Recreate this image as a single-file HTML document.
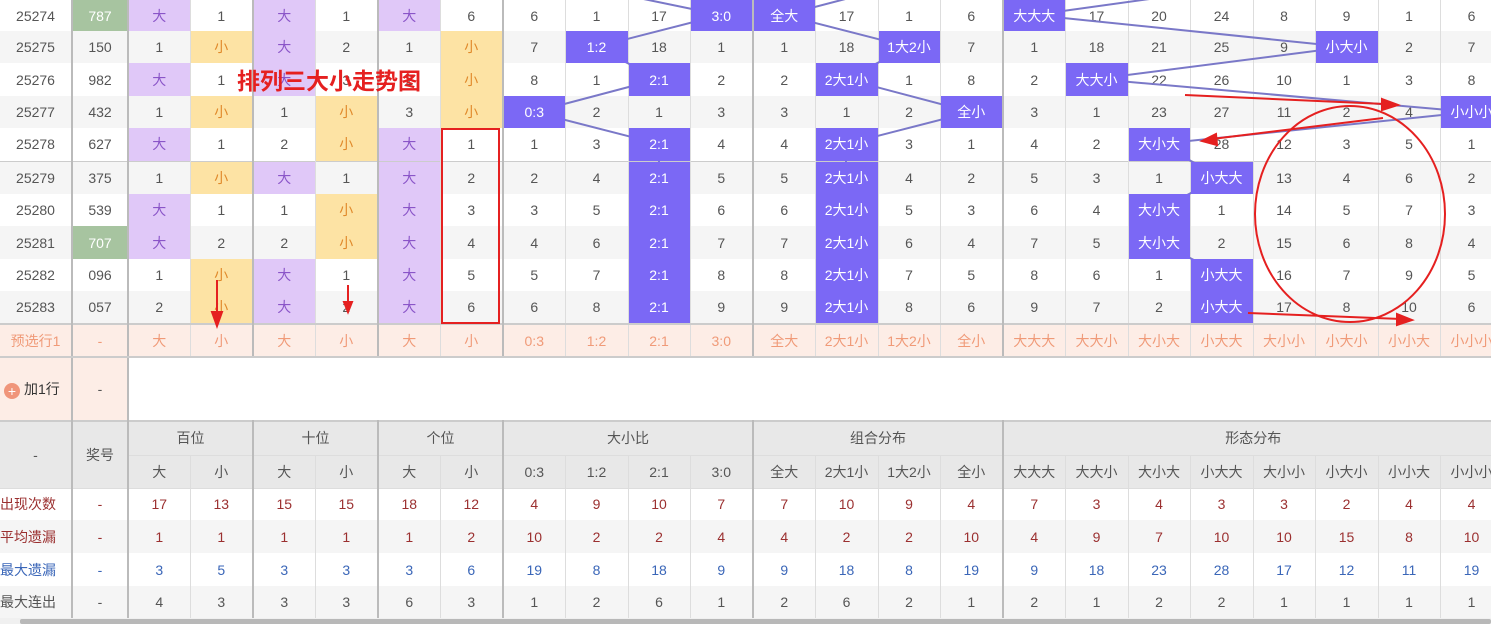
<!DOCTYPE html>
<html><head><meta charset="utf-8"><style>
html,body{margin:0;padding:0;width:1491px;height:624px;overflow:hidden;background:#fff;}
body{position:relative;font-family:"Liberation Sans","Noto Sans CJK SC",sans-serif;font-size:14px;color:#555;}
table{position:absolute;left:0;top:0;border-collapse:collapse;table-layout:fixed;width:1503px;}
td{padding:0;text-align:center;border-right:1px solid #ddd;white-space:nowrap;overflow:hidden;}
tr.o td{background:#f5f5f5;}
td.k{border-right:2px solid #bbb;}
td.b{background:#e0c8f8 !important;color:#8a55c8;}
td.s{background:#fde3a4 !important;color:#e0892a;}
td.p{background:#7b68f5 !important;color:#fff;position:relative;z-index:3;}
td.g{background:#a7c4a0 !important;color:#fff;}
tr.sep td{border-top:1px solid #ccc;}
tr.pre td{background:#fdede6;color:#f09a78;border-top:2px solid #ccc;border-bottom:2px solid #ccc;}
tr.hd td{background:#e8e8e8;color:#555;border-bottom:1px solid #ddd;}
tr.hd1 td{border-top:2px solid #ccc;}
.r{color:#9b3030}.bl{color:#3a66b8}
svg{position:absolute;left:0;top:0;z-index:2;}
svg.top{z-index:5;}
</style></head><body>
<table>
<colgroup><col style="width:72px"><col style="width:56px"><col style="width:62px"><col style="width:63px"><col style="width:62px"><col style="width:63px"><col style="width:62px"><col style="width:63px"><col style="width:62px"><col style="width:63px"><col style="width:62px"><col style="width:63px"><col style="width:62px"><col style="width:63px"><col style="width:62px"><col style="width:63px"><col style="width:62px"><col style="width:63px"><col style="width:62px"><col style="width:63px"><col style="width:62px"><col style="width:63px"><col style="width:62px"><col style="width:63px"></colgroup>
<tr style="height:31px"><td class="k">25274</td><td class="k g">787</td><td class="b">大</td><td class="k">1</td><td class="b">大</td><td class="k">1</td><td class="b">大</td><td class="k">6</td><td>6</td><td>1</td><td>17</td><td class="k p">3:0</td><td class="p">全大</td><td>17</td><td>1</td><td class="k">6</td><td class="p">大大大</td><td>17</td><td>20</td><td>24</td><td>8</td><td>9</td><td>1</td><td>6</td></tr>
<tr class="o" style="height:32px"><td class="k">25275</td><td class="k">150</td><td>1</td><td class="k s">小</td><td class="b">大</td><td class="k">2</td><td>1</td><td class="k s">小</td><td>7</td><td class="p">1:2</td><td>18</td><td class="k">1</td><td>1</td><td>18</td><td class="p">1大2小</td><td class="k">7</td><td>1</td><td>18</td><td>21</td><td>25</td><td>9</td><td class="p">小大小</td><td>2</td><td>7</td></tr>
<tr style="height:33px"><td class="k">25276</td><td class="k">982</td><td class="b">大</td><td class="k">1</td><td class="b">大</td><td class="k">3</td><td>2</td><td class="k s">小</td><td>8</td><td>1</td><td class="p">2:1</td><td class="k">2</td><td>2</td><td class="p">2大1小</td><td>1</td><td class="k">8</td><td>2</td><td class="p">大大小</td><td>22</td><td>26</td><td>10</td><td>1</td><td>3</td><td>8</td></tr>
<tr class="o" style="height:32px"><td class="k">25277</td><td class="k">432</td><td>1</td><td class="k s">小</td><td>1</td><td class="k s">小</td><td>3</td><td class="k s">小</td><td class="p">0:3</td><td>2</td><td>1</td><td class="k">3</td><td>3</td><td>1</td><td>2</td><td class="k p">全小</td><td>3</td><td>1</td><td>23</td><td>27</td><td>11</td><td>2</td><td>4</td><td class="p">小小小</td></tr>
<tr style="height:33px"><td class="k">25278</td><td class="k">627</td><td class="b">大</td><td class="k">1</td><td>2</td><td class="k s">小</td><td class="b">大</td><td class="k">1</td><td>1</td><td>3</td><td class="p">2:1</td><td class="k">4</td><td>4</td><td class="p">2大1小</td><td>3</td><td class="k">1</td><td>4</td><td>2</td><td class="p">大小大</td><td>28</td><td>12</td><td>3</td><td>5</td><td>1</td></tr>
<tr class="o sep" style="height:33px"><td class="k">25279</td><td class="k">375</td><td>1</td><td class="k s">小</td><td class="b">大</td><td class="k">1</td><td class="b">大</td><td class="k">2</td><td>2</td><td>4</td><td class="p">2:1</td><td class="k">5</td><td>5</td><td class="p">2大1小</td><td>4</td><td class="k">2</td><td>5</td><td>3</td><td>1</td><td class="p">小大大</td><td>13</td><td>4</td><td>6</td><td>2</td></tr>
<tr style="height:32px"><td class="k">25280</td><td class="k">539</td><td class="b">大</td><td class="k">1</td><td>1</td><td class="k s">小</td><td class="b">大</td><td class="k">3</td><td>3</td><td>5</td><td class="p">2:1</td><td class="k">6</td><td>6</td><td class="p">2大1小</td><td>5</td><td class="k">3</td><td>6</td><td>4</td><td class="p">大小大</td><td>1</td><td>14</td><td>5</td><td>7</td><td>3</td></tr>
<tr class="o" style="height:33px"><td class="k">25281</td><td class="k g">707</td><td class="b">大</td><td class="k">2</td><td>2</td><td class="k s">小</td><td class="b">大</td><td class="k">4</td><td>4</td><td>6</td><td class="p">2:1</td><td class="k">7</td><td>7</td><td class="p">2大1小</td><td>6</td><td class="k">4</td><td>7</td><td>5</td><td class="p">大小大</td><td>2</td><td>15</td><td>6</td><td>8</td><td>4</td></tr>
<tr style="height:32px"><td class="k">25282</td><td class="k">096</td><td>1</td><td class="k s">小</td><td class="b">大</td><td class="k">1</td><td class="b">大</td><td class="k">5</td><td>5</td><td>7</td><td class="p">2:1</td><td class="k">8</td><td>8</td><td class="p">2大1小</td><td>7</td><td class="k">5</td><td>8</td><td>6</td><td>1</td><td class="p">小大大</td><td>16</td><td>7</td><td>9</td><td>5</td></tr>
<tr class="o" style="height:33px"><td class="k">25283</td><td class="k">057</td><td>2</td><td class="k s">小</td><td class="b">大</td><td class="k">2</td><td class="b">大</td><td class="k">6</td><td>6</td><td>8</td><td class="p">2:1</td><td class="k">9</td><td>9</td><td class="p">2大1小</td><td>8</td><td class="k">6</td><td>9</td><td>7</td><td>2</td><td class="p">小大大</td><td>17</td><td>8</td><td>10</td><td>6</td></tr>
<tr class="pre" style="height:33px"><td class="k">预选行1</td><td class="k">-</td><td>大</td><td class="k">小</td><td>大</td><td class="k">小</td><td>大</td><td class="k">小</td><td>0:3</td><td>1:2</td><td>2:1</td><td class="k">3:0</td><td>全大</td><td>2大1小</td><td>1大2小</td><td class="k">全小</td><td>大大大</td><td>大大小</td><td>大小大</td><td>小大大</td><td>大小小</td><td>小大小</td><td>小小大</td><td>小小小</td></tr>
<tr style="height:64px"><td class="k" style="background:#fdede6;color:#333;text-align:left;padding-left:4px"><span style="display:inline-block;width:16px;height:16px;border-radius:8px;background:#f0957a;color:#fff;font-size:14px;line-height:16px;text-align:center;vertical-align:-2px;margin-right:4px">+</span>加1行</td><td class="k" style="background:#fdede6">-</td><td colspan="22" style="border:none"></td></tr>
<tr class="hd hd1" style="height:34px"><td class="k" rowspan="2">-</td><td class="k" rowspan="2">奖号</td><td colspan="2" class="k">百位</td><td colspan="2" class="k">十位</td><td colspan="2" class="k">个位</td><td colspan="4" class="k">大小比</td><td colspan="4" class="k">组合分布</td><td colspan="8">形态分布</td></tr>
<tr class="hd" style="height:33px"><td>大</td><td class="k">小</td><td>大</td><td class="k">小</td><td>大</td><td class="k">小</td><td>0:3</td><td>1:2</td><td>2:1</td><td class="k">3:0</td><td>全大</td><td>2大1小</td><td>1大2小</td><td class="k">全小</td><td>大大大</td><td>大大小</td><td>大小大</td><td>小大大</td><td>大小小</td><td>小大小</td><td>小小大</td><td>小小小</td></tr>
<tr class="r" style="height:32px"><td class="k" style="text-align:left">出现次数</td><td class="k">-</td><td>17</td><td class="k">13</td><td>15</td><td class="k">15</td><td>18</td><td class="k">12</td><td>4</td><td>9</td><td>10</td><td class="k">7</td><td>7</td><td>10</td><td>9</td><td class="k">4</td><td>7</td><td>3</td><td>4</td><td>3</td><td>3</td><td>2</td><td>4</td><td>4</td></tr>
<tr class="o r" style="height:33px"><td class="k" style="text-align:left">平均遗漏</td><td class="k">-</td><td>1</td><td class="k">1</td><td>1</td><td class="k">1</td><td>1</td><td class="k">2</td><td>10</td><td>2</td><td>2</td><td class="k">4</td><td>4</td><td>2</td><td>2</td><td class="k">10</td><td>4</td><td>9</td><td>7</td><td>10</td><td>10</td><td>15</td><td>8</td><td>10</td></tr>
<tr class="bl" style="height:33px"><td class="k" style="text-align:left">最大遗漏</td><td class="k">-</td><td>3</td><td class="k">5</td><td>3</td><td class="k">3</td><td>3</td><td class="k">6</td><td>19</td><td>8</td><td>18</td><td class="k">9</td><td>9</td><td>18</td><td>8</td><td class="k">19</td><td>9</td><td>18</td><td>23</td><td>28</td><td>17</td><td>12</td><td>11</td><td>19</td></tr>
<tr class="o" style="height:32px"><td class="k" style="text-align:left">最大连出</td><td class="k">-</td><td>4</td><td class="k">3</td><td>3</td><td class="k">3</td><td>6</td><td class="k">3</td><td>1</td><td>2</td><td>6</td><td class="k">1</td><td>2</td><td>6</td><td>2</td><td class="k">1</td><td>2</td><td>1</td><td>2</td><td>2</td><td>1</td><td>1</td><td>1</td><td>1</td></tr>
</table>
<svg width="1491" height="624">
<g stroke="#7a78c8" stroke-width="2" fill="none">
<polyline points="600,-10 721,15 596,47 659,79 534,112 659,144 659,310"/>
<polyline points="880,-10 784,15 909,47 846,79 971,112 846,144 846,310"/>
<polyline points="1200,-8 1034,15 1346,47 1096,79 1471,112 1159,144 1221,177 1159,210 1159,242 1221,274 1221,307"/>
</g>
</svg>
<svg class="top" width="1491" height="624">
<text x="237" y="89" font-size="23" font-weight="bold" fill="#e52020" font-family="Liberation Sans,Noto Sans CJK SC,sans-serif">排列三大小走势图</text>
<rect x="442" y="129" width="57" height="194" fill="none" stroke="#e52020" stroke-width="2"/>
<g stroke="#e52020" stroke-width="2" fill="#e52020">
<line x1="217" y1="280" x2="217" y2="318"/><polygon points="212,312 222,312 217,326"/>
<line x1="348" y1="285" x2="348" y2="306"/><polygon points="344,302 352,302 348,312"/>
<line x1="1185" y1="95" x2="1385" y2="104"/><polygon points="1382,99 1398,105 1382,110"/>
<line x1="1383" y1="118" x2="1212" y2="139"/><polygon points="1216,134 1202,141 1217,145"/>
<line x1="1248" y1="313" x2="1400" y2="319"/><polygon points="1397,314 1412,320 1397,325"/>
</g>
<ellipse cx="1350" cy="214" rx="95" ry="108" fill="none" stroke="#e52020" stroke-width="2"/>
<rect x="0" y="618" width="1491" height="6" fill="#f0f0f0"/>
<rect x="20" y="619" width="1471" height="5" rx="2" fill="#b8b8b8"/>
</svg>
</body></html>
